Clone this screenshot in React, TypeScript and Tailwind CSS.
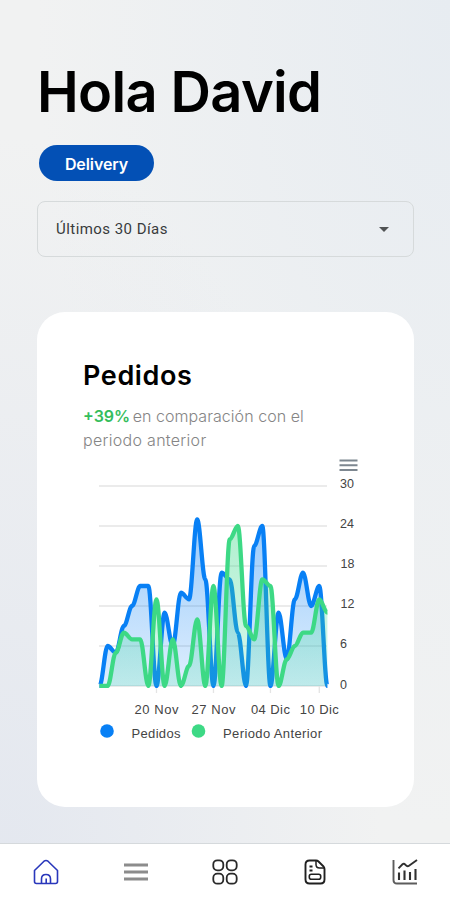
import React from "react";

const pedidos = [0, 6, 5, 9, 12, 15, 15, 0, 11, 6, 14, 13, 25, 16, 0, 17, 16, 8, 0, 21, 24, 0, 11, 4, 13, 17, 12, 15, 0];
const anterior = [0, 0, 5, 8, 7, 7, 0, 13, 0, 7, 0, 3, 10, 0, 15, 0, 22, 24, 9, 7, 16, 15, 0, 4, 6, 8, 8, 13, 11];

const X0 = 16.5;
const STEP = 8.14;
const BASE = 230;
const UNIT = 6.667;

function smoothLine(values: number[]) {
  const pt = (i: number) => [X0 + i * STEP, BASE - values[i] * UNIT];
  let d = `M${pt(0)[0]} ${pt(0)[1]}`;
  for (let i = 1; i < values.length; i++) {
    const [px, py] = pt(i - 1);
    const [x, y] = pt(i);
    const k = STEP * 0.35;
    d += ` C${px + k} ${py} ${x - k} ${y} ${x} ${y}`;
  }
  return d;
}

function areaOf(values: number[]) {
  return `${smoothLine(values)} V${BASE} H${X0} Z`;
}

function Chart() {
  const rows = [30, 24, 18, 12, 6, 0];
  const ticks: [number, string][] = [
    [7, "20 Nov"],
    [14, "27 Nov"],
    [21, "04 Dic"],
    [27, "10 Dic"],
  ];
  return (
    <svg width="284" height="300" viewBox="0 0 284 300" className="mt-[3.5px] block shrink-0 font-['Liberation_Sans',Arial,sans-serif]">
      <defs>
        <linearGradient id="blueFill" x1="0" y1="60" x2="0" y2={BASE} gradientUnits="userSpaceOnUse">
          <stop offset="0" stopColor="#0880f5" stopOpacity="0.42" />
          <stop offset="1" stopColor="#0880f5" stopOpacity="0.13" />
        </linearGradient>
        <linearGradient id="greenFill" x1="0" y1="60" x2="0" y2={BASE} gradientUnits="userSpaceOnUse">
          <stop offset="0" stopColor="#3dd985" stopOpacity="0.42" />
          <stop offset="1" stopColor="#3dd9a0" stopOpacity="0.2" />
        </linearGradient>
        <clipPath id="plot">
          <rect x="14" y="20" width="234" height="212" />
        </clipPath>
      </defs>
      <g stroke="#e4e4e4" strokeWidth="1.3">
        {rows.map((v) => (
          <line key={v} x1="16" x2="244" y1={BASE - v * UNIT} y2={BASE - v * UNIT} />
        ))}
        {ticks.map(([i]) => (
          <line key={i} x1={X0 + i * STEP} x2={X0 + i * STEP} y1={BASE} y2={BASE + 7} />
        ))}
      </g>
      <g clipPath="url(#plot)" strokeWidth="4.300" strokeLinejoin="round">
        <path d={areaOf(pedidos)} fill="url(#blueFill)" />
        <path d={smoothLine(pedidos)} fill="none" stroke="#0880f5" />
        <path d={areaOf(anterior)} fill="url(#greenFill)" />
        <path d={smoothLine(anterior)} fill="none" stroke="#3dd985" />
      </g>
      <g stroke="#7d8790" strokeWidth="2">
        <path d="M256.500 4.500h18M256.500 9.300h18M256.500 14.100h18" />
      </g>
      <g fill="#444" fontSize="12.500">
        {rows.map((v) => (
          <text key={v} x={v === 18 || v === 12 ? 257.5 : 257} y={BASE + 2.5 - v * UNIT}>
            {v}
          </text>
        ))}
      </g>
      <g fill="#444" fontSize="13" textAnchor="middle">
        {ticks.map(([i, label]) => (
          <text key={label} x={X0 + i * STEP} y="258" textLength={i > 20 ? 39 : 44}>
            {label}
          </text>
        ))}
      </g>
      <circle cx="24" cy="275" r="6.800" fill="#0880f5" />
      <circle cx="115.500" cy="275" r="6.800" fill="#3dd985" />
      <g fill="#444" fontSize="13">
        <text x="48.500" y="282" textLength="49">Pedidos</text>
        <text x="140" y="282" textLength="99">Periodo Anterior</text>
      </g>
    </svg>
  );
}

function HomeIcon() {
  return (
    <svg width="26" height="26" viewBox="0 0 26 26" fill="none" stroke="#2937bb" strokeWidth="1.600" strokeLinejoin="round">
      <path d="M1.500 11.500 11 2.200Q13 .700 15 2.200L24.500 11.500v11q0 2-2 2h-19q-2 0-2-2Z" />
      <path d="M8.500 24.500v-4.500q0-4.500 4.500-4.500t4.500 4.500v4.500M13.200 24.500v-5" />
    </svg>
  );
}

function MenuIcon() {
  return (
    <svg width="26" height="26" viewBox="0 0 26 26" stroke="#8c8c8c" strokeWidth="3">
      <path d="M1 6h24M1 13h24M1 20h24" />
    </svg>
  );
}

function GridIcon() {
  return (
    <svg width="26" height="26" viewBox="0 0 26 26" fill="none" stroke="#292929" strokeWidth="1.800">
      <rect x="1.300" y="1.300" width="10" height="10" rx="4" />
      <rect x="14.700" y="1.300" width="10" height="10" rx="4" />
      <rect x="1.300" y="14.700" width="10" height="10" rx="4" />
      <rect x="14.700" y="14.700" width="10" height="10" rx="4" />
    </svg>
  );
}

function DocumentIcon() {
  return (
    <svg width="26" height="26" viewBox="0 0 26 26" fill="none" stroke="#202020" strokeWidth="1.900" strokeLinejoin="round">
      <path d="M7.500 1.500H14Q15.500 1.500 16.500 2.500L21.300 7.200Q22.500 8.500 22.500 10v10.500q0 4-4 4h-11q-4 0-4-4v-15q0-4 4-4Z" />
      <path d="M14 1.800v3.700q0 3.500 3.500 3.500h4.700" strokeWidth="1.500" />
      <path d="M7.500 7.500h3M7.500 11.500h3" />
      <rect x="7.300" y="15.300" width="11.400" height="5" rx="2" strokeWidth="1.600" />
    </svg>
  );
}

function StatsIcon() {
  return (
    <svg width="26" height="26" viewBox="0 0 26 26" fill="none" stroke="#303030" strokeWidth="1.900">
      <path d="M1.500 1v20q0 3.500 3.500 3.500h20" stroke="#5c5c5c" />
      <path d="M7 21v-7.500M12.500 21V11.500M18 21v-8M23.500 21V10" strokeWidth="2.100" />
      <path d="M6.500 9.300 10.500 5.300Q12 4 13.500 5.800 15.300 8 17 6.800L25 .900" />
    </svg>
  );
}

export default function App() {
  return (
    <div className="flex h-[900px] w-[450px] flex-col overflow-hidden bg-[radial-gradient(ellipse_at_bottom_left,#e3e7ef_0%,#e3e7ef00_60%),radial-gradient(ellipse_at_top_right,#e7ecf1_0%,#e7ecf100_65%),linear-gradient(#f1f2f2,#f1f2f2)] font-['Inter','Open_Sans',sans-serif]">
      <main className="flex h-[843px] flex-col items-start pl-[37px] pt-[57px]">
        <h1 className="h-[70px] whitespace-nowrap text-[56px] font-semibold leading-[70px] tracking-[-0.65px] text-black">Hola David</h1>
        <span className="ml-0.5 mt-[18px] flex h-9 w-[115px] items-center justify-center rounded-full bg-[#0350b5] pt-px text-base font-semibold tracking-[-0.1px] text-white">
          Delivery
        </span>
        <button className="mt-5 flex h-14 w-[377px] items-center justify-between rounded-lg border border-[#d6dadb] pl-[18px] pr-6 font-['Roboto',sans-serif] text-[15px] tracking-[0.45px] text-[#383b3c]">
          Últimos 30 Días
          <span className="h-0 w-0 border-x-[5px] border-t-[5px] border-x-transparent border-t-[#505354]" />
        </button>
        <section className="mt-[55px] flex h-[495px] w-[377px] flex-col rounded-[28px] bg-white pl-[46px] pt-[43px]">
          <h2 className="h-10 text-[27px] font-semibold leading-[42px] tracking-[0.6px] text-black">Pedidos</h2>
          <p className="mt-[9px] whitespace-nowrap text-base font-light leading-[24px] text-[#858585]">
            <span className="font-semibold text-[#35bd5c]">+39%</span> <span className="-ml-0.5 tracking-[0.05px]">en comparación con el</span>
            <br />
            <span className="tracking-[0.3px]">periodo anterior</span>
          </p>
          <Chart />
        </section>
      </main>
      <nav className="grid h-[57px] grid-cols-5 items-center justify-items-center border-t border-[#d5d9dc] bg-white pl-px">
        <HomeIcon />
        <MenuIcon />
        <GridIcon />
        <DocumentIcon />
        <StatsIcon />
      </nav>
    </div>
  );
}
